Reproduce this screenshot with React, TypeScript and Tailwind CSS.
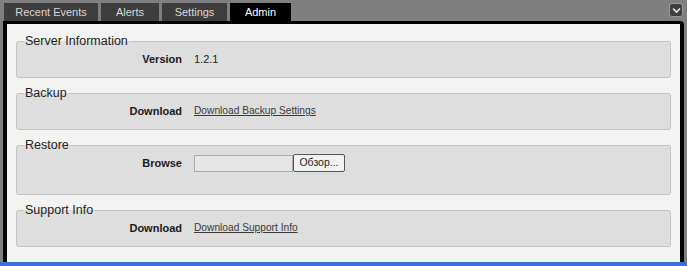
const tabs = ["Recent Events", "Alerts", "Settings", "Admin"];
const tabWidths = ["w-[94px]", "w-[58px]", "w-[65px]", "w-[61px]"];

function Section(props: { title: string; label: string; children: React.ReactNode; extra?: boolean }) {
  return (
    <fieldset
      className={`rounded-[3px] border border-[#c4c4c4] bg-[#dedede] pt-[2px] ${props.extra ? "pb-[22px]" : "pb-[9px]"}`}
    >
      <legend className="ml-[7px] px-[1px] text-[12.5px] leading-[14px] text-[#222]">{props.title}</legend>
      <div className="flex h-[18px] items-center">
        <span className="w-[165px] text-right text-[11px] font-bold text-[#1a1a1a]">{props.label}</span>
        <div className="ml-[12px] flex items-center text-[10.2px] text-[#3a3a3a]">{props.children}</div>
      </div>
    </fieldset>
  );
}

export default function App() {
  return (
    <div
      className="flex h-[266px] w-[687px] flex-col overflow-hidden bg-[#7f7f7f]"
      style={{ fontFamily: '"Liberation Sans", Arial, sans-serif' }}
    >
      <div className="flex h-[21px] items-start justify-between pl-[4px] pr-[4px] pt-[3px]">
        <div className="flex gap-[3px]">
          {tabs.map((t, i) => (
            <div
              key={t}
              className={`flex h-[18px] items-center justify-center text-[11px] ${tabWidths[i]} ${
                t === "Admin" ? "bg-black text-white" : "bg-[#3d3d3d] text-[#d8d8d8]"
              }`}
            >
              {t}
            </div>
          ))}
        </div>
        <div className="flex h-[14px] w-[14px] items-center justify-center rounded-[3px] border border-[#9a9a9a] bg-[#3f3f3f]">
          <svg width="9" height="7" viewBox="0 0 9 7">
            <path d="M1 1.5 L4.5 5 L8 1.5" fill="none" stroke="#e8e8e8" strokeWidth="1.6" />
          </svg>
        </div>
      </div>
      <div className="mx-[3px] flex flex-1 flex-col gap-[8px] rounded-tr-[4px] border-x-[4px] border-t-[3px] border-black bg-[#f3f3f1] px-[9px] pt-[10px]">
        <Section title="Server Information" label="Version">
          <span className="text-[11px] text-[#222]">1.2.1</span>
        </Section>
        <Section title="Backup" label="Download">
          <span className="underline">Download Backup Settings</span>
        </Section>
        <Section title="Restore" label="Browse" extra>
          <div className="h-[17px] w-[99px] border border-[#aaa] bg-[#e6e6e6]" />
          <button className="h-[18px] w-[52px] rounded-[2px] border border-[#555] bg-[#f2f2f2] text-[10.5px] text-[#222]">
            Обзор...
          </button>
        </Section>
        <Section title="Support Info" label="Download">
          <span className="underline">Download Support Info</span>
        </Section>
      </div>
      <div className="h-[4px] bg-[#3a70d0]" />
    </div>
  );
}
